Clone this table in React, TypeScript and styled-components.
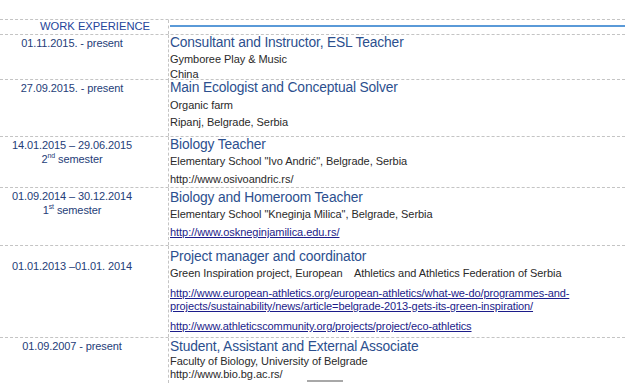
import React from 'react'
import styled, { createGlobalStyle } from 'styled-components'

const GlobalStyle = createGlobalStyle`
  body {
    margin: 0;
    background: #ffffff;
    font-family: 'Liberation Sans', Arial, sans-serif;
  }
`

const Sheet = styled.div`
  padding-top: 19px;
  width: 625px;
  height: 384px;
  overflow: hidden;
  box-sizing: border-box;
`

const Row = styled.div<{ $height: number }>`
  display: grid;
  grid-template-columns: 168px 1fr;
  height: ${p => p.$height}px;
  border-top: 1px dashed #c4c4c4;
  box-sizing: border-box;

  &:last-child {
    border-bottom: 1px dashed #c4c4c4;
  }
`

const DateCell = styled.div<{ $top?: number }>`
  padding: ${p => p.$top ?? 1}px 32px 0 8px;
  text-align: center;
  font-size: 11px;
  line-height: 14px;
  color: #253d78;
  letter-spacing: -0.1px;

  sup {
    font-size: 7px;
    line-height: 0;
  }
`

const HeaderCell = styled.div`
  padding: 0 18px 0 0;
  text-align: right;
  font-size: 11.2px;
  line-height: 13px;
  color: #24449a;
  text-transform: uppercase;
`

const Body = styled.div<{ $pad?: number }>`
  border-left: 1px dashed #c4c4c4;
  padding: ${p => p.$pad ?? 0}px 0 0 1px;
  display: flex;
  flex-direction: column;
`

const Rule = styled.div`
  margin-top: 5px;
  height: 2px;
  background: #5a9ad8;
`

const Title = styled.div`
  font-size: 13.8px;
  line-height: 16px;
  color: #2c4f8e;
  letter-spacing: -0.15px;
  white-space: nowrap;
`

const Line = styled.div<{ $gap?: number }>`
  font-size: 11px;
  line-height: ${p => 13 + (p.$gap ?? 0)}px;
  padding-top: ${p => p.$gap ?? 0}px;
  color: #2a2a2a;
  letter-spacing: -0.05px;
  white-space: nowrap;
`

const Link = styled.a`
  color: #1c1c8a;
  text-decoration: underline;
  text-underline-offset: 1px;
`

const Url = styled.div`
  font-size: 11px;
  line-height: 13px;
  color: #1c1c8a;
  letter-spacing: -0.1px;
  text-decoration: underline;
  padding-top: 7px;
  white-space: nowrap;
`

const Stub = styled.div`
  position: absolute;
  left: 307px;
  top: 380px;
  width: 36px;
  height: 2px;
  background: #a8a8a8;
`

export default function App() {
  return (
    <Sheet>
      <GlobalStyle />
      <Row $height={15}>
        <HeaderCell>Work Experience</HeaderCell>
        <Body>
          <Rule />
        </Body>
      </Row>

      <Row $height={45}>
        <DateCell>01.11.2015. - present</DateCell>
        <Body>
          <Title>Consultant and Instructor, ESL Teacher</Title>
          <Line $gap={1}>Gymboree Play &amp; Music</Line>
          <Line $gap={1}>China</Line>
        </Body>
      </Row>

      <Row $height={57}>
        <DateCell>27.09.2015. - present</DateCell>
        <Body>
          <Title>Main Ecologist and Conceptual Solver</Title>
          <Line $gap={2}>Organic farm</Line>
          <Line $gap={2}>Ripanj, Belgrade, Serbia</Line>
        </Body>
      </Row>

      <Row $height={51}>
        <DateCell>
          14.01.2015 – 29.06.2015
          <br />
          2<sup>nd</sup> semester
        </DateCell>
        <Body>
          <Title>Biology Teacher</Title>
          <Line $gap={1}>Elementary School "Ivo Andrić", Belgrade, Serbia</Line>
          <Line $gap={3}>http://www.osivoandric.rs/</Line>
        </Body>
      </Row>

      <Row $height={58}>
        <DateCell>
          01.09.2014 – 30.12.2014
          <br />
          1<sup>st</sup> semester
        </DateCell>
        <Body $pad={2}>
          <Title>Biology and Homeroom Teacher</Title>
          <Line $gap={1}>Elementary School "Kneginja Milica", Belgrade, Serbia</Line>
          <Line $gap={3}>
            <Link href="#">http://www.oskneginjamilica.edu.rs/</Link>
          </Line>
        </Body>
      </Row>

      <Row $height={92}>
        <DateCell $top={13}>01.01.2013 –01.01. 2014</DateCell>
        <Body $pad={3}>
          <Title>Project manager and coordinator</Title>
          <Line $gap={1}>Green Inspiration project, European &nbsp;&nbsp; Athletics and Athletics Federation of Serbia</Line>
          <Url>
            http://www.european-athletics.org/european-athletics/what-we-do/programmes-and-
            <br />
            projects/sustainability/news/article=belgrade-2013-gets-its-green-inspiration/
          </Url>
          <Url>http://www.athleticscommunity.org/projects/project/eco-athletics</Url>
        </Body>
      </Row>

      <Row $height={46}>
        <DateCell>01.09.2007 - present</DateCell>
        <Body $pad={1}>
          <Title>Student, Assistant and External Associate</Title>
          <Line>Faculty of Biology, University of Belgrade</Line>
          <Line>http://www.bio.bg.ac.rs/</Line>
        </Body>
      </Row>
      <Stub />
    </Sheet>
  )
}
